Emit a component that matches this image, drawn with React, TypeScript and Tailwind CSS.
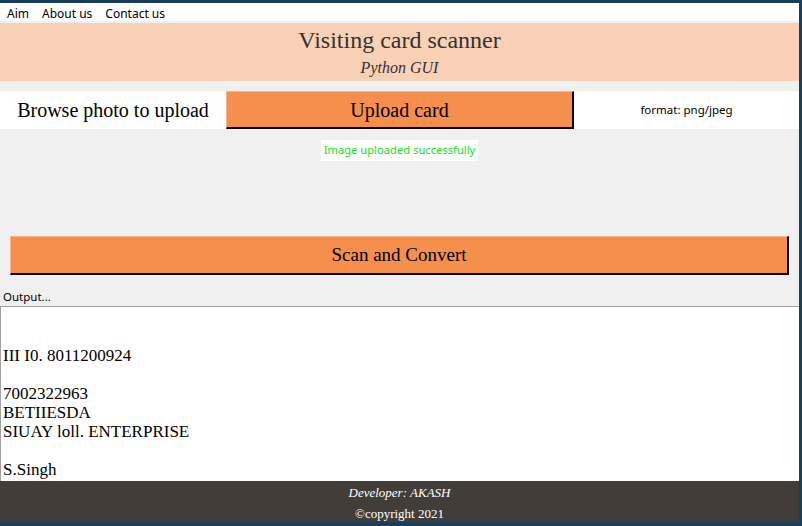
import React from 'react';

const outputLines = ['', '', 'III I0. 8011200924', '', '7002322963', 'BETIIESDA', 'SIUAY loll. ENTERPRISE', '', 'S.Singh'];

const App: React.FC = () => {
  return (
    <div className="w-[802px] h-[526px] flex flex-col bg-[#f0f0f0] border-t-[3px] border-r-[3px] border-b-[4px] border-[#173f5c] overflow-hidden">
      {/* Menu bar */}
      <div className="h-[18px] bg-white flex items-center pt-[3px] gap-[13px] px-[7px] text-[12px] text-black font-['Noto_Sans',sans-serif] leading-none">
        <span>Aim</span>
        <span>About us</span>
        <span>Contact us</span>
      </div>
      <div className="h-[2px] bg-[#f0f0f0]" />

      {/* Header */}
      <div className="h-[58px] bg-[#f9d1b6] flex flex-col items-center font-['Liberation_Serif',serif] text-[#333]">
        <h1 className="text-[24px] leading-none mt-[5px]">Visiting card scanner</h1>
        <p className="text-[16px] italic leading-none mt-[8px]">Python GUI</p>
      </div>

      {/* Upload row */}
      <div className="mt-[10px] h-[38px] flex">
        <div className="w-[226px] bg-white flex items-center justify-center font-['Liberation_Serif',serif] text-[20px] text-black">
          Browse photo to upload
        </div>
        <button className="w-[348px] bg-[#f58f4b] border-t border-l border-[#f9b48a] border-b-2 border-r-2 border-b-black border-r-black font-['Liberation_Serif',serif] text-[20px] text-black">
          Upload card
        </button>
        <div className="flex-1 bg-white flex items-center justify-center text-[11.5px] text-black font-['Noto_Sans',sans-serif]">
          format: png/jpeg
        </div>
      </div>

      <div className="flex justify-center mt-[11px]">
        <span className="bg-white px-[3px] h-[21px] flex items-center text-[11.2px] text-[#22dd22] font-['Noto_Sans',sans-serif]">
          Image uploaded successfully
        </span>
      </div>

      {/* Scan button */}
      <div className="px-[10px] mt-[75px]">
        <button className="w-full h-[39px] bg-[#f58f4b] border-t border-l border-[#f9b48a] border-b-2 border-r-2 border-b-black border-r-black font-['Liberation_Serif',serif] text-[19px] text-black">
          Scan and Convert
        </button>
      </div>

      <div className="mt-[12px] h-[19px] px-[3px] flex items-center text-[11.5px] text-black font-['Noto_Sans',sans-serif]">
        Output...
      </div>

      {/* Output text */}
      <div className="h-[175px] bg-white border-t border-l border-[#a0a0a0] px-[2px] font-['Liberation_Serif',serif] text-[17px] leading-[19px] text-black overflow-hidden">
        {outputLines.map((line, i) => (
          <div key={i} className="h-[19px] pt-[1px]">{line}</div>
        ))}
      </div>

      {/* Footer */}
      <div className="flex-1 bg-[#433d3a] flex flex-col items-center font-['Liberation_Serif',serif] text-white text-[13px] leading-none">
        <p className="italic mt-[5px]">Developer: AKASH</p>
        <p className="mt-[8px]">©copyright 2021</p>
      </div>
    </div>
  );
};

export default App;
